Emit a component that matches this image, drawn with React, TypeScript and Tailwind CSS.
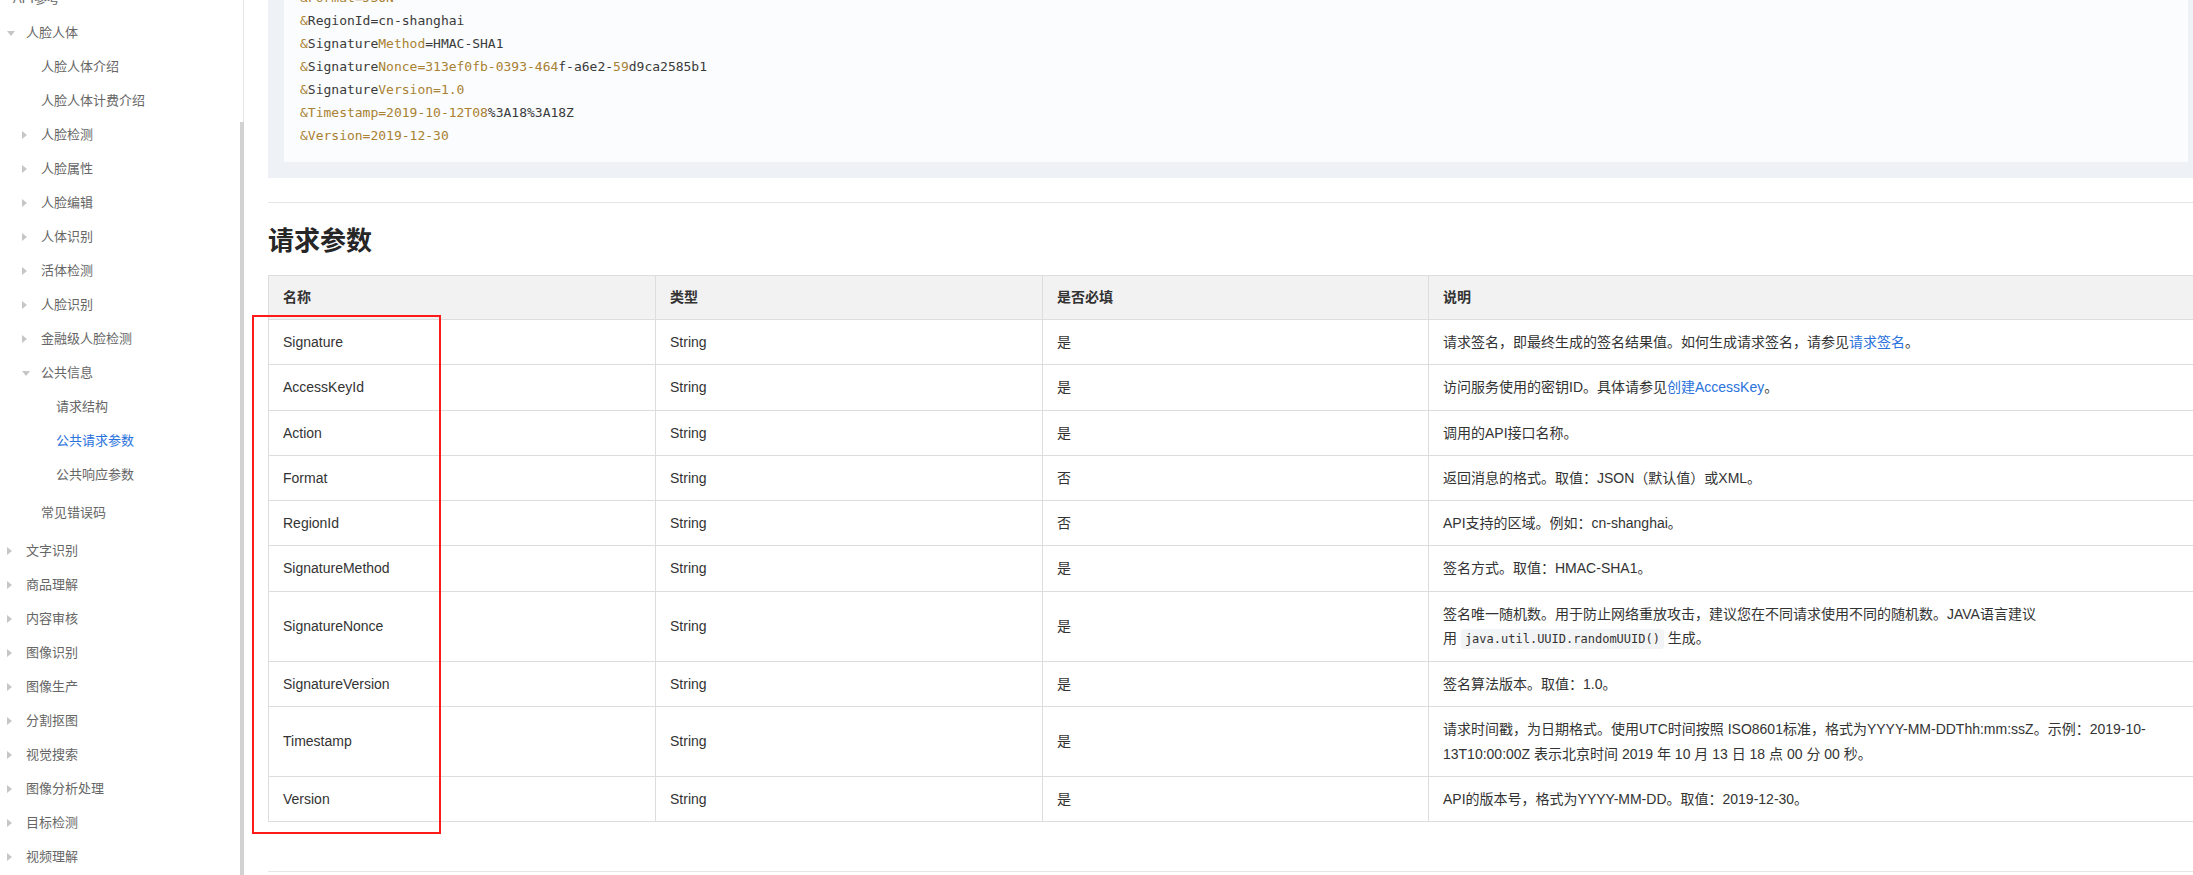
import React from "react";

type NavItem = {
  label: string;
  level: 0 | 1 | 2 | 3;
  arrow?: "down" | "right";
  active?: boolean;
  gapTop?: boolean;
};

const nav: NavItem[] = [
  { label: "API参考", level: 0 },
  { label: "人脸人体", level: 1, arrow: "down" },
  { label: "人脸人体介绍", level: 2 },
  { label: "人脸人体计费介绍", level: 2 },
  { label: "人脸检测", level: 2, arrow: "right" },
  { label: "人脸属性", level: 2, arrow: "right" },
  { label: "人脸编辑", level: 2, arrow: "right" },
  { label: "人体识别", level: 2, arrow: "right" },
  { label: "活体检测", level: 2, arrow: "right" },
  { label: "人脸识别", level: 2, arrow: "right" },
  { label: "金融级人脸检测", level: 2, arrow: "right" },
  { label: "公共信息", level: 2, arrow: "down" },
  { label: "请求结构", level: 3 },
  { label: "公共请求参数", level: 3, active: true },
  { label: "公共响应参数", level: 3 },
  { label: "常见错误码", level: 2, gapTop: true },
  { label: "文字识别", level: 1, arrow: "right", gapTop: true },
  { label: "商品理解", level: 1, arrow: "right" },
  { label: "内容审核", level: 1, arrow: "right" },
  { label: "图像识别", level: 1, arrow: "right" },
  { label: "图像生产", level: 1, arrow: "right" },
  { label: "分割抠图", level: 1, arrow: "right" },
  { label: "视觉搜索", level: 1, arrow: "right" },
  { label: "图像分析处理", level: 1, arrow: "right" },
  { label: "目标检测", level: 1, arrow: "right" },
  { label: "视频理解", level: 1, arrow: "right" },
];

function Arrow({ dir }: { dir?: "down" | "right" }) {
  if (dir === "down")
    return (
      <span className="block w-0 h-0 border-x-[4px] border-x-transparent border-t-[5px] border-t-[#c6c6c6]" />
    );
  if (dir === "right")
    return (
      <span className="block w-0 h-0 border-y-[4px] border-y-transparent border-l-[5px] border-l-[#c6c6c6]" />
    );
  return null;
}

function NavRow({ item }: { item: NavItem }) {
  const pad =
    item.level === 0
      ? "pl-[13px]"
      : item.level === 1
      ? "pl-[7px]"
      : item.level === 2
      ? "pl-[22px]"
      : "pl-[56px]";
  const hasArrowSlot = item.level === 1 || item.level === 2;
  return (
    <div
      className={`h-[34px] flex items-center ${pad} ${item.gapTop ? "mt-[4px]" : ""}`}
    >
      {hasArrowSlot && (
        <span className="w-[19px] flex items-center">
          <Arrow dir={item.arrow} />
        </span>
      )}
      <span
        className={`text-[13px] whitespace-nowrap ${
          item.active ? "text-[#2a72dc]" : "text-[#666]"
        }`}
      >
        {item.label}
      </span>
    </div>
  );
}

const O = "text-[#a98132]";
const D = "text-[#3a3a3a]";

const codeLines: [string, string][][] = [
  [["&Format=JSON", O]],
  [["&", O], ["RegionId=cn-shanghai", D]],
  [["&", O], ["Signature", D], ["Method", O], ["=HMAC-SHA1", D]],
  [
    ["&", O],
    ["Signature", D],
    ["Nonce=313ef0fb-0393-464", O],
    ["f-a6e2-", D],
    ["59", O],
    ["d9ca2585b1", D],
  ],
  [["&", O], ["Signature", D], ["Version=1.0", O]],
  [["&Timestamp=2019-10-12T08", O], ["%3A18%3A18Z", D]],
  [["&Version=2019-12-30", O]],
];

type Row = {
  name: string;
  req: string;
  desc: React.ReactNode;
};

const A = ({ children }: { children: React.ReactNode }) => (
  <span className="text-[#2a72dc]">{children}</span>
);

const rows: Row[] = [
  {
    name: "Signature",
    req: "是",
    desc: (
      <>
        请求签名，即最终生成的签名结果值。如何生成请求签名，请参见<A>请求签名</A>。
      </>
    ),
  },
  {
    name: "AccessKeyId",
    req: "是",
    desc: (
      <>
        访问服务使用的密钥ID。具体请参见<A>创建AccessKey</A>。
      </>
    ),
  },
  { name: "Action", req: "是", desc: <>调用的API接口名称。</> },
  { name: "Format", req: "否", desc: <>返回消息的格式。取值：JSON（默认值）或XML。</> },
  { name: "RegionId", req: "否", desc: <>API支持的区域。例如：cn-shanghai。</> },
  { name: "SignatureMethod", req: "是", desc: <>签名方式。取值：HMAC-SHA1。</> },
  {
    name: "SignatureNonce",
    req: "是",
    desc: (
      <>
        <div>签名唯一随机数。用于防止网络重放攻击，建议您在不同请求使用不同的随机数。JAVA语言建议</div>
        <div>
          用{" "}
          <code className="font-['DejaVu_Sans_Mono',monospace] text-[12px] bg-[#f3f4f5] rounded-[3px] px-[4px] py-[3px]">
            java.util.UUID.randomUUID()
          </code>{" "}
          生成。
        </div>
      </>
    ),
  },
  { name: "SignatureVersion", req: "是", desc: <>签名算法版本。取值：1.0。</> },
  {
    name: "Timestamp",
    req: "是",
    desc: (
      <>
        <div>
          请求时间戳，为日期格式。使用UTC时间按照 ISO8601标准，格式为YYYY-MM-DDThh:mm:ssZ。示例：2019-10-
        </div>
        <div>13T10:00:00Z 表示北京时间 2019 年 10 月 13 日 18 点 00 分 00 秒。</div>
      </>
    ),
  },
  { name: "Version", req: "是", desc: <>API的版本号，格式为YYYY-MM-DD。取值：2019-12-30。</> },
];

const cell = "border border-[#dddddd] px-[14px] py-[10px] text-[14px] leading-[24.25px] text-[#333]";

export default function App() {
  return (
    <div className="relative w-[2193px] h-[875px] overflow-hidden bg-white flex font-['Liberation_Sans','Noto_Sans_CJK_SC',sans-serif] text-[#333]">
      {/* Sidebar */}
      <aside className="relative w-[244px] shrink-0 h-full border-r border-[#e6e6e6] bg-white">
        <div className="-mt-[18px]">
          {nav.map((it) => (
            <NavRow key={it.label} item={it} />
          ))}
        </div>
        {/* scrollbar thumb */}
        <div className="absolute right-[-1px] top-[122px] bottom-0 w-[4px] bg-[#d2d2d2]" />
      </aside>

      {/* Main */}
      <main className="pl-[24px] shrink-0 w-[1960px]">
        <div className="w-[1936px]">
          {/* code block */}
          <div className="-mt-[44px] bg-[#eef2f6] px-[16px] pt-[15px] pb-[16px]">
            <pre className="bg-[#fbfcfd] pl-[16px] py-[15px] font-['DejaVu_Sans_Mono',monospace] text-[13px] leading-[23px]">
              {codeLines.map((line, i) => (
                <div key={i}>
                  {line.map(([t, c], j) => (
                    <span key={j} className={c}>
                      {t}
                    </span>
                  ))}
                </div>
              ))}
            </pre>
          </div>

          <div className="mt-[24px] border-t border-[#e6e6e6]" />
          <h2 className="mt-[19px] text-[26px] leading-[39px] font-bold text-[#262626]">
            请求参数
          </h2>

          <table className="mt-[14px] w-full table-fixed border-collapse">
            <colgroup>
              <col className="w-[387px]" />
              <col className="w-[387px]" />
              <col className="w-[386px]" />
              <col />
            </colgroup>
            <thead>
              <tr className="bg-[#f2f2f2]">
                {["名称", "类型", "是否必填", "说明"].map((h) => (
                  <th
                    key={h}
                    className="border border-[#dddddd] px-[14px] py-[10px] text-left text-[14px] leading-[23px] font-semibold text-[#333]"
                  >
                    {h}
                  </th>
                ))}
              </tr>
            </thead>
            <tbody>
              {rows.map((r) => (
                <tr key={r.name}>
                  <td className={cell}>{r.name}</td>
                  <td className={cell}>String</td>
                  <td className={cell}>{r.req}</td>
                  <td className={cell}>
                    <div className="whitespace-nowrap">{r.desc}</div>
                  </td>
                </tr>
              ))}
            </tbody>
          </table>

          <div className="mt-[49px] border-t border-[#e6e6e6]" />
        </div>
      </main>

      {/* red annotation box */}
      <div className="absolute left-[252px] top-[315px] w-[189px] h-[519px] border-2 border-[#ff1a1a] pointer-events-none" />
    </div>
  );
}
